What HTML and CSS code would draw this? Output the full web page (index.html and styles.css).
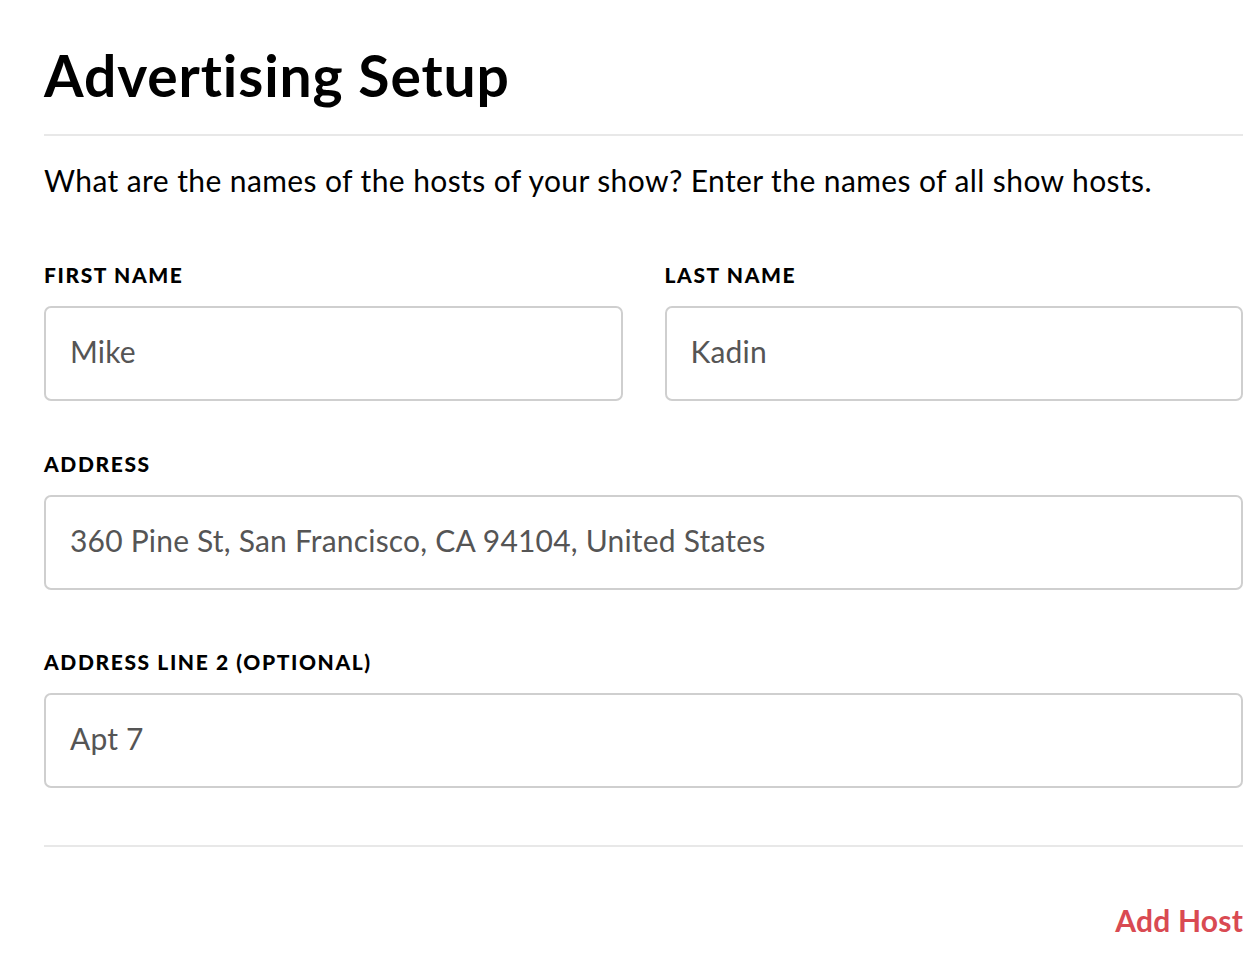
FILE: index.html
```html
<!DOCTYPE html>
<html>
<head>
<meta charset="utf-8">
<link rel="stylesheet" href="styles.css">
</head>
<body>
<div class="page">
  <h1 class="title">Advertising Setup</h1>
  <div class="rule"></div>
  <p class="intro">What are the names of the hosts of your show? Enter the names of all show hosts.</p>
  <div class="row">
    <div class="field">
      <div class="label">FIRST NAME</div>
      <div class="input">Mike</div>
    </div>
    <div class="field">
      <div class="label">LAST NAME</div>
      <div class="input">Kadin</div>
    </div>
  </div>
  <div class="field field-addr">
    <div class="label">ADDRESS</div>
    <div class="input">360 Pine St, San Francisco, CA 94104, United States</div>
  </div>
  <div class="field field-gap">
    <div class="label">ADDRESS LINE 2 (OPTIONAL)</div>
    <div class="input">Apt 7</div>
  </div>
  <div class="rule rule-bottom"></div>
  <div class="actions"><span class="add">Add Host</span></div>
</div>
</body>
</html>
```
FILE: styles.css
```css
* { box-sizing: border-box; }
body {
  margin: 0;
  background: #fff;
  font-family: Lato, "Noto Sans", sans-serif;
  font-variant-ligatures: none;
  color: #000;
}
.page {
  width: 1199px;
  margin-left: 44px;
  padding-top: 40px;
}
.title {
  margin: 0;
  font-size: 57px;
  line-height: 70px;
  font-weight: 700;
  letter-spacing: 0.9px;
}
.rule {
  height: 2px;
  background: #e8e8e8;
  margin-top: 24px;
}
.intro {
  margin: 24px 0 0 0;
  font-size: 30px;
  line-height: 40px;
  font-weight: 400;
  letter-spacing: 0.4px;
}
.row {
  display: grid;
  grid-template-columns: 1fr 1fr;
  column-gap: 42px;
  margin-top: 63px;
}
.field { display: flex; flex-direction: column; }
.field-addr { margin-top: 51px; }
.field-gap { margin-top: 60px; }
.label {
  font-size: 21px;
  line-height: 24px;
  font-weight: 900;
  letter-spacing: 1.6px;
  margin-bottom: 19px;
}
.input {
  height: 95px;
  border: 2px solid #cfcfcf;
  border-radius: 7px;
  padding: 0 24px 6px;
  display: flex;
  align-items: center;
  font-size: 30px;
  color: #555;
  font-weight: 400;
  letter-spacing: 0.2px;
}
.rule-bottom { margin-top: 57px; }
.actions {
  display: flex;
  justify-content: flex-end;
  margin-top: 55px;
}
.add {
  font-size: 30px;
  line-height: 36px;
  font-weight: 700;
  color: #d94a52;
  letter-spacing: 0.2px;
}
```
